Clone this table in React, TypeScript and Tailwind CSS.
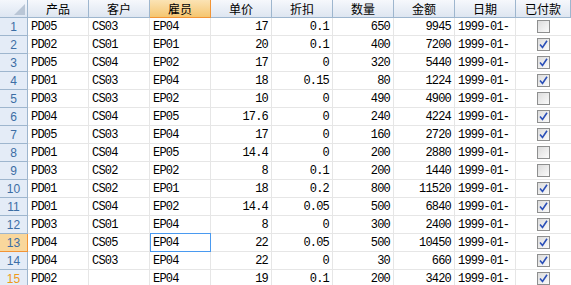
import React from "react";

type Row = [string, string, string, string, string, string, string, boolean];

const rows: Row[] = [
  ["PD05", "CS03", "EP04", "17", "0.1", "650", "9945", false],
  ["PD02", "CS01", "EP01", "20", "0.1", "400", "7200", true],
  ["PD05", "CS04", "EP02", "17", "0", "320", "5440", true],
  ["PD01", "CS03", "EP04", "18", "0.15", "80", "1224", true],
  ["PD03", "CS03", "EP02", "10", "0", "490", "4900", false],
  ["PD04", "CS04", "EP05", "17.6", "0", "240", "4224", true],
  ["PD05", "CS03", "EP04", "17", "0", "160", "2720", true],
  ["PD01", "CS04", "EP05", "14.4", "0", "200", "2880", false],
  ["PD03", "CS02", "EP02", "8", "0.1", "200", "1440", false],
  ["PD01", "CS02", "EP01", "18", "0.2", "800", "11520", true],
  ["PD01", "CS04", "EP02", "14.4", "0.05", "500", "6840", true],
  ["PD03", "CS01", "EP04", "8", "0", "300", "2400", true],
  ["PD04", "CS05", "EP04", "22", "0.05", "500", "10450", true],
  ["PD04", "CS03", "EP04", "22", "0", "30", "660", true],
  ["PD02", "", "EP04", "19", "0.1", "200", "3420", true],
];

const headers = ["产品", "客户", "雇员", "单价", "折扣", "数量", "金额", "日期", "已付款"];

const mono = "font-['Liberation_Mono',monospace] text-[12px] tracking-[-0.8px]";

const Check = ({ on }: { on: boolean }) => (
  <div className="w-[13px] h-[13px] border border-[#8e8f8f] bg-gradient-to-br from-[#dcdcdc] to-[#fbfbfb] flex items-center justify-center">
    {on && (
      <svg width="9" height="9" viewBox="0 0 9 9">
        <path d="M1 4.5 L3.5 7.5 L8 0.8" fill="none" stroke="#2a4fb8" strokeWidth="1.6" />
      </svg>
    )}
  </div>
);

export default function App() {
  return (
    <div className="w-[571px] h-[285px] overflow-hidden bg-white font-['Noto_Sans_CJK_SC',sans-serif] text-black">
      <div className="grid grid-cols-[28px_repeat(8,61px)_1fr] auto-rows-[18px]">
        <div className="relative border-r border-b border-[#9eb6ce] bg-gradient-to-b from-[#f4f7fc] to-[#dde6f2]">
          <svg className="absolute right-[2px] bottom-[2px]" width="11" height="11" viewBox="0 0 11 11">
            <polygon points="11,0 11,11 0,11" fill="#b9c6d6" />
          </svg>
        </div>
        {headers.map((h, i) =>
          i === 2 ? (
            <div
              key={h}
              className="flex items-center justify-center text-[12px] border-r border-b border-[#f29436] bg-gradient-to-b from-[#fbe3b4] to-[#f5c66f]"
            >
              {h}
            </div>
          ) : (
            <div
              key={h}
              className="flex items-center justify-center text-[12px] border-r border-b border-[#9eb6ce] bg-gradient-to-b from-[#f6f8fc] to-[#dee6f1]"
            >
              {h}
            </div>
          )
        )}
        {rows.map((r, ri) => {
          const n = ri + 1;
          const sel = n === 13;
          return (
            <React.Fragment key={n}>
              <div
                className={
                  sel
                    ? "flex items-center justify-center font-['Liberation_Sans',sans-serif] text-[12px] text-[#3c6ea5] border-r border-b border-[#f29436] bg-[#f9d79c]"
                    : `flex items-center justify-center font-['Liberation_Sans',sans-serif] text-[12px] ${n === 15 ? "text-[#ee9a1a]" : "text-[#3c6ea5]"} border-r border-b border-[#9eb6ce] bg-[#e4ecf7]`
                }
              >
                {n}
              </div>
              {r.slice(0, 3).map((c, ci) => (
                <div
                  key={ci}
                  className={
                    sel && ci === 2
                      ? `flex items-center pl-[2px] ${mono} border border-[#4a9af0] -mt-px`
                      : `flex items-center pl-[3px] ${mono} border-r border-b border-[#e6e6e6]`
                  }
                >
                  {c}
                </div>
              ))}
              {r.slice(3, 7).map((c, ci) => (
                <div key={ci + 3} className={`flex items-center justify-end pr-[3px] ${mono} border-r border-b border-[#e6e6e6]`}>
                  {c as string}
                </div>
              ))}
              <div className={`flex items-center pl-[3px] ${mono} border-r border-b border-[#e6e6e6]`}>1999-01-</div>
              <div className="flex items-center justify-center border-b border-[#e6e6e6]">
                <Check on={r[7]} />
              </div>
            </React.Fragment>
          );
        })}
      </div>
    </div>
  );
}
